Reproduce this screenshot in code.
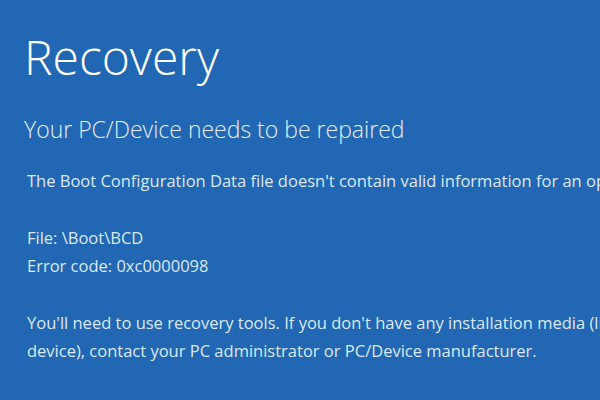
export default function App() {
  return (
    <div
      className="w-[600px] h-[400px] overflow-hidden bg-[#2167b3] text-[#e4edf8]"
      style={{ fontFamily: '"Open Sans", "Noto Sans", sans-serif' }}
    >
      <div className="pl-[24px] pt-[29px] whitespace-nowrap">
        <h1 className="text-[48px] leading-[56px] font-light text-white">Recovery</h1>
        <h2 className="mt-[30px] text-[23px] leading-[28px] font-light">
          Your PC/Device needs to be repaired
        </h2>
        <div className="mt-[24px] pl-[3px] text-[16.5px] leading-[28px] font-normal text-[#dce7f4]">
          <p>The Boot Configuration Data file doesn't contain valid information for an operating system.</p>
          <p className="mt-[29px]">File: \Boot\BCD</p>
          <p>Error code: 0xc0000098</p>
          <p className="mt-[29px]">
            You'll need to use recovery tools. If you don't have any installation media (like a disc or USB
          </p>
          <p>device), contact your PC administrator or PC/Device manufacturer.</p>
        </div>
      </div>
    </div>
  );
}
